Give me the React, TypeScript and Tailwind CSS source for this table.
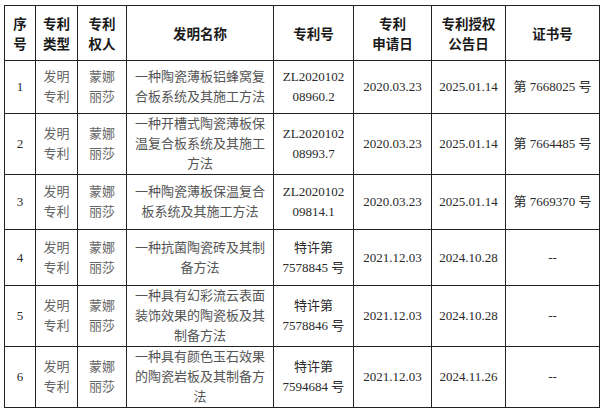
const widths = ["w-[31px]", "w-[42px]", "w-[49px]", "w-[147px]", "w-[80px]", "w-[78px]", "w-[74px]", "w-[94px]"];

const headers: string[][] = [
  ["序", "号"],
  ["专利", "类型"],
  ["专利", "权人"],
  ["发明名称"],
  ["专利号"],
  ["专利", "申请日"],
  ["专利授权", "公告日"],
  ["证书号"],
];

type Row = {
  n: string;
  h: string;
  name: string[];
  no: string[];
  apply: string;
  grant: string;
  cert: string;
};

const rows: Row[] = [
  {
    n: "1",
    h: "h-[53px]",
    name: ["一种陶瓷薄板铝蜂窝复", "合板系统及其施工方法"],
    no: ["ZL2020102", "08960.2"],
    apply: "2020.03.23",
    grant: "2025.01.14",
    cert: "第 7668025 号",
  },
  {
    n: "2",
    h: "h-[60px]",
    name: ["一种开槽式陶瓷薄板保", "温复合板系统及其施工", "方法"],
    no: ["ZL2020102", "08993.7"],
    apply: "2020.03.23",
    grant: "2025.01.14",
    cert: "第 7664485 号",
  },
  {
    n: "3",
    h: "h-[55px]",
    name: ["一种陶瓷薄板保温复合", "板系统及其施工方法"],
    no: ["ZL2020102", "09814.1"],
    apply: "2020.03.23",
    grant: "2025.01.14",
    cert: "第 7669370 号",
  },
  {
    n: "4",
    h: "h-[56px]",
    name: ["一种抗菌陶瓷砖及其制", "备方法"],
    no: ["特许第", "7578845 号"],
    apply: "2021.12.03",
    grant: "2024.10.28",
    cert: "--",
  },
  {
    n: "5",
    h: "h-[60px]",
    name: ["一种具有幻彩流云表面", "装饰效果的陶瓷板及其", "制备方法"],
    no: ["特许第", "7578846 号"],
    apply: "2021.12.03",
    grant: "2024.10.28",
    cert: "--",
  },
  {
    n: "6",
    h: "h-[59px]",
    name: ["一种具有颜色玉石效果", "的陶瓷岩板及其制备方", "法"],
    no: ["特许第", "7594684 号"],
    apply: "2021.12.03",
    grant: "2024.11.26",
    cert: "--",
  },
];

function Lines({ items }: { items: string[] }) {
  return (
    <>
      {items.map((t, i) => (
        <div key={i}>{t}</div>
      ))}
    </>
  );
}

const cell = "border border-[#222] text-center align-middle p-0 leading-[20px]";

export default function App() {
  return (
    <div className="min-h-[411px] w-[603px] bg-white pl-[4px] pt-[5px] font-['Liberation_Serif','Noto_Sans_CJK_SC',serif] text-[13px]">
      <table className="w-[595px] table-fixed border-collapse">
        <colgroup>
          {widths.map((w, i) => (
            <col key={i} className={w} />
          ))}
        </colgroup>
        <thead>
          <tr className="h-[55px]">
            {headers.map((h, i) => (
              <th
                key={i}
                className={`${cell} font-['Noto_Sans_CJK_SC',sans-serif] text-[13.5px] font-bold text-[#1a1a1a]`}
              >
                <Lines items={h} />
              </th>
            ))}
          </tr>
        </thead>
        <tbody className="text-[#2a2a2a]">
          {rows.map((r) => (
            <tr key={r.n} className={r.h}>
              <td className={cell}>{r.n}</td>
              <td className={`${cell} text-[#666]`}>
                <Lines items={["发明", "专利"]} />
              </td>
              <td className={`${cell} text-[#666]`}>
                <Lines items={["蒙娜", "丽莎"]} />
              </td>
              <td className={`${cell} text-[#555]`}>
                <Lines items={r.name} />
              </td>
              <td className={cell}>
                <Lines items={r.no} />
              </td>
              <td className={cell}>{r.apply}</td>
              <td className={cell}>{r.grant}</td>
              <td className={cell}>{r.cert}</td>
            </tr>
          ))}
        </tbody>
      </table>
    </div>
  );
}
